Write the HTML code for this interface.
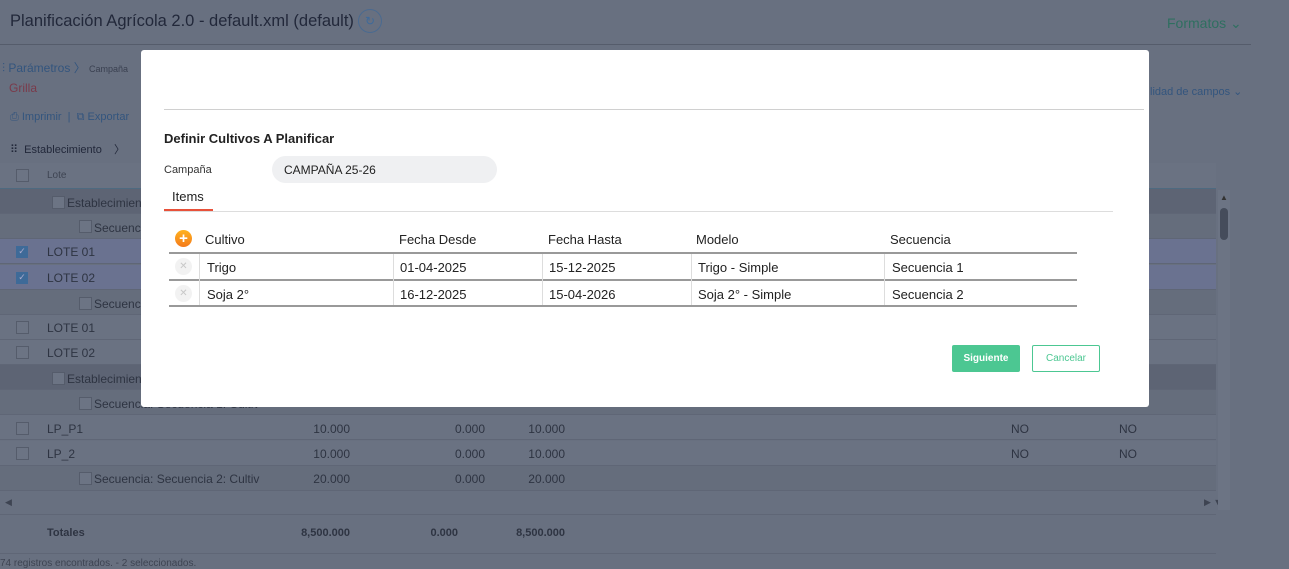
<!DOCTYPE html>
<html><head><meta charset="utf-8"><style>
*{box-sizing:border-box;margin:0;padding:0}
body{width:1289px;height:568px;overflow:hidden;background:#687080;font-family:"Liberation Sans",sans-serif;position:relative;color:#2c3140}
.a{position:absolute;white-space:nowrap}
.row{position:absolute;left:0;width:1216px;height:25px;border-bottom:1px solid #5f6676}
.cb{position:absolute;width:13px;height:13px;border:1px solid #555c6b;background:#6c7484}
.bt{font-size:12px;color:#2e3442}
.num{font-size:12px;color:#2e3442;text-align:right;width:80px}
.m{background:#fff;position:absolute;left:141px;top:50px;width:1008px;height:357px;border-radius:3px}
.th{font-size:13px;color:#222;position:absolute}
.td{font-size:13px;color:#222;position:absolute}
.x{position:absolute;width:17px;height:17px;border-radius:50%;background:#f2f2f2;color:#c8c8c8;font-size:10px;text-align:center;line-height:17px}
</style></head><body>
<div class="a" style="left:10px;top:12px;font-size:16.5px;color:#22283a">Planificación Agrícola 2.0 - default.xml (default)</div>
<div class="a" style="left:358px;top:9px;width:24px;height:24px;border:1px solid #4a6a90;border-radius:50%;color:#3e6a9a;font-size:12px;text-align:center;line-height:22px">↻</div>
<div class="a" style="left:1167px;top:15px;font-size:14px;color:#2f6f60">Formatos ⌄</div>
<div class="a" style="left:0;top:44px;width:1251px;height:1px;background:#555c6b"></div>
<div class="a" style="left:2px;top:59px;font-size:12px;color:#33557e">⫶ Parámetros 〉 <span style="font-size:9px;color:#3a4050">Campaña</span></div>
<div class="a" style="left:9px;top:81px;font-size:12px;color:#7a3a4a">Grilla</div>
<div class="a" style="left:10px;top:111px;font-size:11px;color:#33557e">⎙ Imprimir &nbsp;|&nbsp; ⧉ Exportar</div>
<div class="a" style="left:1150px;top:85px;font-size:11px;color:#33557e">lidad de campos ⌄</div>
<div class="a" style="left:10px;top:141px;font-size:11px;color:#22283a">⠿ &nbsp;Establecimiento &nbsp;&nbsp;&nbsp;〉</div>
<div class="a" style="left:0;top:163px;width:1216px;height:26px;background:#6a7282;border-bottom:1px solid #4e6a80"></div>
<div class="cb" style="left:16px;top:169px"></div>
<div class="a" style="left:47px;top:170px;font-size:10px;color:#3e4452">Lote</div>
<div class="row" style="top:189px;background:#5d6474"></div><div class="cb" style="left:52px;top:196px"></div><div class="a bt" style="left:67px;top:196px">Establecimien</div>
<div class="row" style="top:214px;background:#656d7c"></div><div class="cb" style="left:79px;top:220px"></div><div class="a bt" style="left:94px;top:221px">Secuenc</div>
<div class="row" style="top:239px;background:#6a7290"></div><div class="a" style="left:16px;top:246px;width:12px;height:12px;background:#3e6a98;color:#aac;font-size:9px;text-align:center">✓</div><div class="a bt" style="left:47px;top:245px">LOTE 01</div>
<div class="row" style="top:265px;background:#6a7290"></div><div class="a" style="left:16px;top:272px;width:12px;height:12px;background:#3e6a98;color:#aac;font-size:9px;text-align:center">✓</div><div class="a bt" style="left:47px;top:271px">LOTE 02</div>
<div class="row" style="top:290px;background:#656d7c"></div><div class="cb" style="left:79px;top:297px"></div><div class="a bt" style="left:94px;top:297px">Secuenc</div>
<div class="row" style="top:315px;background:#6a7282"></div><div class="cb" style="left:16px;top:321px"></div><div class="a bt" style="left:47px;top:321px">LOTE 01</div>
<div class="row" style="top:340px;background:#6a7282"></div><div class="cb" style="left:16px;top:346px"></div><div class="a bt" style="left:47px;top:346px">LOTE 02</div>
<div class="row" style="top:365px;background:#5d6474"></div><div class="cb" style="left:52px;top:372px"></div><div class="a bt" style="left:67px;top:372px">Establecimien</div>
<div class="row" style="top:390px;background:#656d7c"></div><div class="cb" style="left:79px;top:397px"></div><div class="a bt" style="left:94px;top:397px">Secuencia: Secuencia 1: Cultiv</div>
<div class="row" style="top:415px;background:#6a7282"></div><div class="cb" style="left:16px;top:422px"></div><div class="a bt" style="left:47px;top:422px">LP_P1</div>
<div class="a num" style="left:270px;top:422px">10.000</div><div class="a num" style="left:405px;top:422px">0.000</div><div class="a num" style="left:485px;top:422px">10.000</div>
<div class="a bt" style="left:1011px;top:422px">NO</div><div class="a bt" style="left:1119px;top:422px">NO</div>
<div class="row" style="top:441px;background:#6a7282"></div><div class="cb" style="left:16px;top:447px"></div><div class="a bt" style="left:47px;top:447px">LP_2</div>
<div class="a num" style="left:270px;top:447px">10.000</div><div class="a num" style="left:405px;top:447px">0.000</div><div class="a num" style="left:485px;top:447px">10.000</div>
<div class="a bt" style="left:1011px;top:447px">NO</div><div class="a bt" style="left:1119px;top:447px">NO</div>
<div class="row" style="top:466px;background:#656d7c"></div><div class="cb" style="left:79px;top:472px"></div><div class="a bt" style="left:94px;top:472px">Secuencia: Secuencia 2: Cultiv</div>
<div class="a num" style="left:270px;top:472px">20.000</div><div class="a num" style="left:405px;top:472px">0.000</div><div class="a num" style="left:485px;top:472px">20.000</div>
<div class="a" style="left:5px;top:497px;font-size:9px;color:#3e4452">◀</div>
<div class="a" style="left:1204px;top:497px;font-size:9px;color:#3e4452">▶ ▼</div>
<div class="a" style="left:1218px;top:190px;width:12px;height:320px;background:#6c7484"></div>
<div class="a" style="left:1220px;top:193px;font-size:8px;color:#333">▲</div>
<div class="a" style="left:1220px;top:208px;width:8px;height:32px;border-radius:4px;background:#454c5b"></div>
<div class="a" style="left:0;top:514px;width:1216px;height:1px;background:#5f6676"></div>
<div class="a bt" style="left:47px;top:527px;font-size:11px;font-weight:bold">Totales</div>
<div class="a num" style="left:270px;top:527px;font-size:11px;font-weight:bold">8,500.000</div><div class="a num" style="left:378px;top:527px;font-size:11px;font-weight:bold">0.000</div><div class="a num" style="left:485px;top:527px;font-size:11px;font-weight:bold">8,500.000</div>
<div class="a" style="left:0;top:553px;width:1216px;height:1px;background:#5f6676"></div>
<div class="a" style="left:0;top:558px;font-size:10px;color:#3e4452">74 registros encontrados. - 2 seleccionados.</div>

<div class="m"></div>
<div class="a" style="left:164px;top:109px;width:980px;height:1px;background:#d0d0d0"></div>
<div class="a" style="left:164px;top:131px;font-size:13px;font-weight:bold;color:#222">Definir Cultivos A Planificar</div>
<div class="a" style="left:164px;top:164px;font-size:11px;color:#333">Campaña</div>
<div class="a" style="left:272px;top:156px;width:225px;height:27px;border-radius:14px;background:#eff0f2;font-size:12px;color:#222;padding:7px 0 0 12px">CAMPAÑA 25-26</div>
<div class="a" style="left:172px;top:189px;font-size:13px;color:#222">Items</div>
<div class="a" style="left:164px;top:211px;width:949px;height:1px;background:#ddd"></div>
<div class="a" style="left:164px;top:209px;width:49px;height:2px;background:#e8513a"></div>
<div class="a" style="left:175px;top:230px;width:17px;height:17px;border-radius:50%;background:linear-gradient(#ffb21e,#f47a1c);color:#fff;font-size:15px;line-height:17px;text-align:center;font-weight:bold">+</div>
<div class="th" style="left:205px;top:232px">Cultivo</div>
<div class="th" style="left:399px;top:232px">Fecha Desde</div>
<div class="th" style="left:548px;top:232px">Fecha Hasta</div>
<div class="th" style="left:696px;top:232px">Modelo</div>
<div class="th" style="left:890px;top:232px">Secuencia</div>
<div class="a" style="left:169px;top:252px;width:908px;height:2px;background:#999"></div>
<div class="a" style="left:169px;top:279px;width:908px;height:2px;background:#999"></div>
<div class="a" style="left:169px;top:305px;width:908px;height:2px;background:#999"></div>
<div class="a" style="left:199px;top:254px;width:1px;height:51px;background:#ddd"></div>
<div class="a" style="left:393px;top:254px;width:1px;height:51px;background:#ddd"></div>
<div class="a" style="left:542px;top:254px;width:1px;height:51px;background:#ddd"></div>
<div class="a" style="left:691px;top:254px;width:1px;height:51px;background:#ddd"></div>
<div class="a" style="left:884px;top:254px;width:1px;height:51px;background:#ddd"></div>
<div class="x" style="left:175px;top:258px">✕</div>
<div class="x" style="left:175px;top:285px">✕</div>
<div class="td" style="left:207px;top:260px">Trigo</div><div class="td" style="left:400px;top:260px">01-04-2025</div><div class="td" style="left:549px;top:260px">15-12-2025</div><div class="td" style="left:698px;top:260px">Trigo - Simple</div><div class="td" style="left:892px;top:260px">Secuencia 1</div>
<div class="td" style="left:207px;top:287px">Soja 2°</div><div class="td" style="left:400px;top:287px">16-12-2025</div><div class="td" style="left:549px;top:287px">15-04-2026</div><div class="td" style="left:698px;top:287px">Soja 2° - Simple</div><div class="td" style="left:892px;top:287px">Secuencia 2</div>
<div class="a" style="left:952px;top:345px;width:68px;height:27px;background:#4cc792;border-radius:2px;color:#fff;font-size:10px;font-weight:bold;text-align:center;line-height:27px">Siguiente</div>
<div class="a" style="left:1032px;top:345px;width:68px;height:27px;border:1px solid #4cc792;border-radius:2px;color:#4cc792;font-size:10px;text-align:center;line-height:25px">Cancelar</div>
</body></html>
